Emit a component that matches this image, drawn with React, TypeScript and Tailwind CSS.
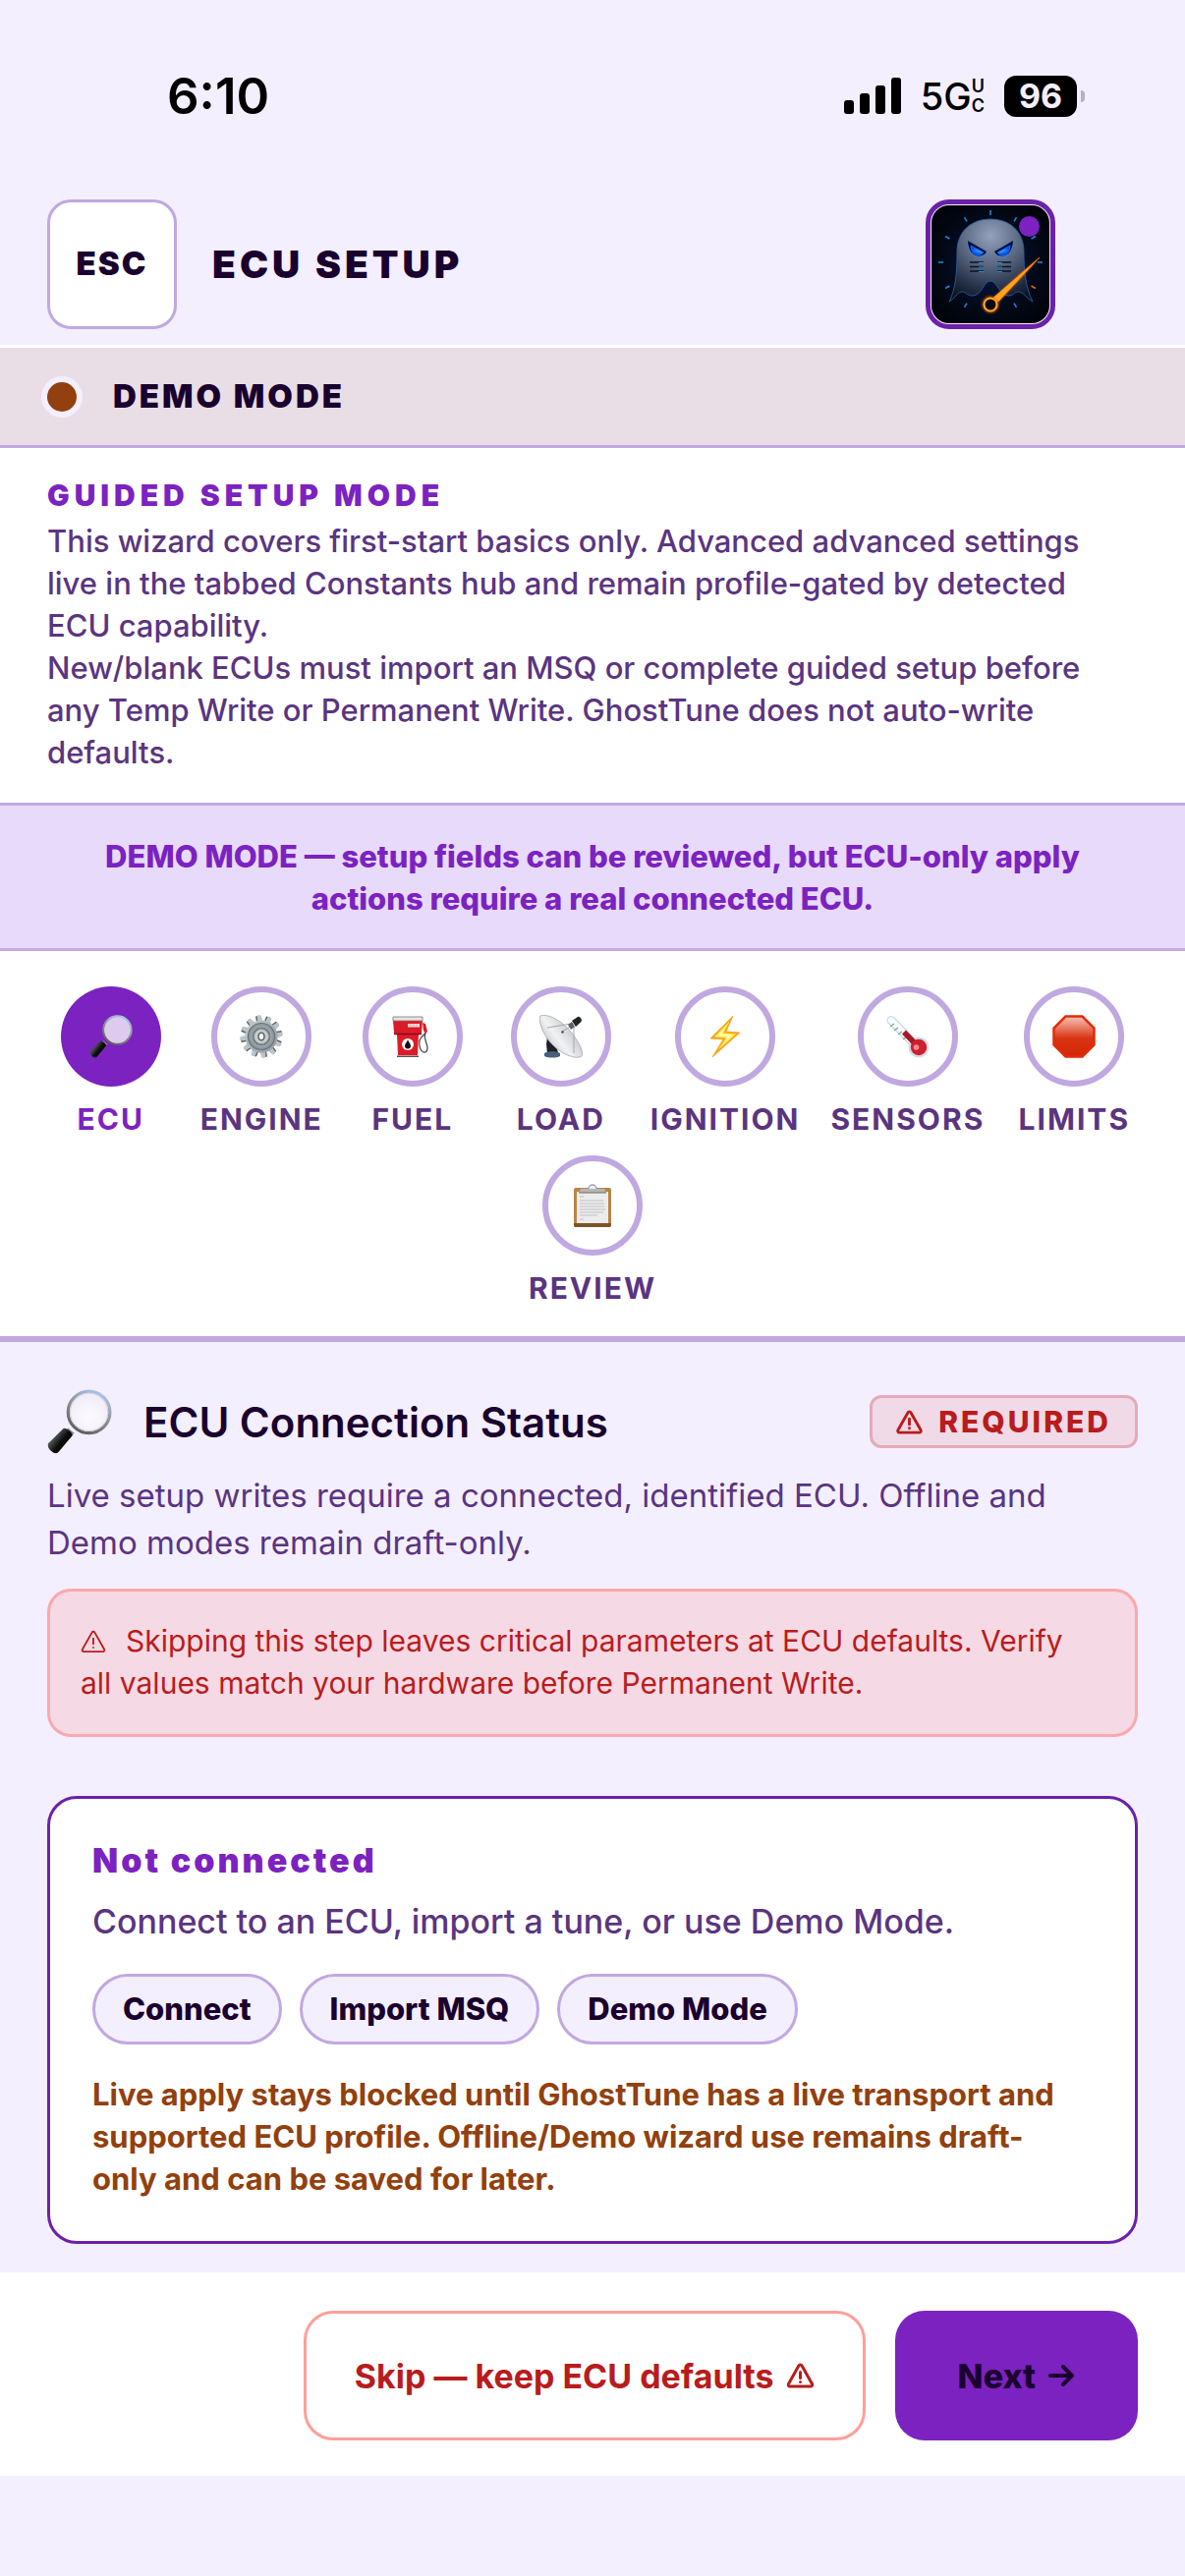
import { useId } from 'react'
import type { ReactNode } from 'react'

type IconProps = { className?: string }

function Magnifier({ className }: IconProps) {
  const id = useId()
  return (
    <svg viewBox="0 0 62 62" className={className} aria-hidden="true">
      <defs>
        <radialGradient id={`${id}g`} cx="0.5" cy="0.6" r="0.6">
          <stop offset="0" stopColor="#fff" stopOpacity="0.75" />
          <stop offset="1" stopColor="#efe9f6" stopOpacity="0.85" />
        </radialGradient>
        <linearGradient id={`${id}r`} x1="0.7" y1="0" x2="0.2" y2="1">
          <stop offset="0" stopColor="#a9c4ea" />
          <stop offset="0.5" stopColor="#8d8d90" />
          <stop offset="1" stopColor="#5b5b5b" />
        </linearGradient>
        <linearGradient id={`${id}h`} x1="0" y1="0" x2="1" y2="0.8">
          <stop offset="0" stopColor="#111" />
          <stop offset="0.35" stopColor="#4a5052" />
          <stop offset="0.6" stopColor="#0b0b0b" />
        </linearGradient>
      </defs>
      <path d="M20 37l6 5-5 6-6-6z" fill="#8a8a8a" />
      <path d="M15.500 37.500c2-1.500 9.500 4 8.500 7L11 60c-3 4-12-3-10-8z" fill={`url(#${id}h)`} />
      <circle cx="40" cy="22" r="20" fill={`url(#${id}g)`} stroke={`url(#${id}r)`} strokeWidth="3" />
      <circle cx="40" cy="22" r="18" fill="none" stroke="#d5d5da" strokeWidth="1" />
    </svg>
  )
}

function Gear({ className }: IconProps) {
  const id = useId()
  return (
    <svg viewBox="0 0 44 44" className={className} aria-hidden="true">
      <defs>
        <linearGradient id={id} x1="0" y1="0" x2="1" y2="1">
          <stop offset="0" stopColor="#c6cdd2" />
          <stop offset="1" stopColor="#8d979d" />
        </linearGradient>
      </defs>
      {Array.from({ length: 12 }, (_, i) => (
        <g key={i} transform={`rotate(${i * 30 - 8} 22 22)`}>
          <path d="M19 1l4-.5 2 8h-6z" fill="#5d5650" />
          <path d="M20.500 0.500h4l1.500 8h-6z" fill="#b9c4cb" />
        </g>
      ))}
      <circle cx="22" cy="22" r="16.500" fill={`url(#${id})`} />
      <circle cx="22" cy="22" r="13.500" fill="#929ba0" stroke="#68727a" strokeWidth="1.200" />
      <circle cx="22" cy="22" r="10" fill="#747d83" stroke="#a9b1b5" strokeWidth="1" />
      <circle cx="22" cy="22" r="7.500" fill="#c3cdd4" stroke="#8a949a" strokeWidth="0.800" />
      <ellipse cx="22" cy="22" rx="3" ry="3.800" fill="#fff" stroke="#6a625c" strokeWidth="1.600" />
    </svg>
  )
}

function FuelPump({ className }: IconProps) {
  return (
    <svg viewBox="0 0 44 44" className={className} aria-hidden="true">
      <path d="M35 18c-1 3-5 4-6 8-1 6 1 11 4 12 4 1 5-4 3-9-1-4-3-6-1-11" fill="none" stroke="#4d4d4d" strokeWidth="1.300" />
      <path d="M32 8l3 1 2 8-2 2-2-3z" fill="#d0222c" />
      <path d="M6 20h22l-1 21H7z" fill="#df1a28" />
      <path d="M2 5h30l-1 14H3z" fill="#dc1b28" />
      <path d="M2 2h30v4H2z" fill="#e9e3e3" stroke="#777" strokeWidth="0.800" />
      <path d="M17 9h12v3.500H17z" fill="#f6dede" />
      <path d="M20 9v3.500M23 9v3.500M26 9v3.500" stroke="#d77" strokeWidth="0.600" />
      <path d="M3 19.500h28" stroke="#7d0d15" strokeWidth="1.400" />
      <circle cx="17" cy="30" r="6" fill="#fff" />
      <path d="M17 25.500c2 3.500 3 4.500 3 6a3 3 0 0 1-6 0c0-1.500 1-2.500 3-6z" fill="#111" />
      <path d="M6 41.500h22v1.500H6z" fill="#5b4b4b" />
    </svg>
  )
}

function Dish({ className }: IconProps) {
  const id = useId()
  return (
    <svg viewBox="0 0 44 44" className={className} aria-hidden="true">
      <defs>
        <linearGradient id={id} x1="0" y1="1" x2="1" y2="0.300">
          <stop offset="0" stopColor="#a5a6a9" />
          <stop offset="0.500" stopColor="#f1f2f4" />
          <stop offset="1" stopColor="#b4b7ba" />
        </linearGradient>
      </defs>
      <path d="M8 22l9 8 2 9H8l-1-9z" fill="#1e2226" />
      <path d="M5 39c3-2.500 13-2.500 16 0v3c-4 2-12 2-16 0z" fill="#46607c" />
      <path d="M1 1c8-3 24 6 33 19 7 9 11 18 9 22-6 4-21-2-31-13C4 21-2 5 1 1z" fill={`url(#${id})`} stroke="#a3a5a8" strokeWidth="0.800" />
      <path d="M8 13l24-4M35 12v27M23 17l10-6" stroke="#a3a7ab" strokeWidth="1" fill="none" />
      <circle cx="23.500" cy="17.500" r="1.200" fill="#444" />
      <path d="M29 10l3 5 4-3-3-5z" fill="#5e6266" />
      <path d="M33 6l6-4c2-1 5 3 3.500 5L37 12z" fill="#202428" />
    </svg>
  )
}

function Bolt({ className }: IconProps) {
  return (
    <svg viewBox="0 0 44 44" className={className} aria-hidden="true">
      <path d="M30 1L7 24l13 1L9 43l28-25-14-1z" fill="#f9a51c" stroke="#f9a51c" strokeWidth="0.800" strokeLinejoin="round" />
      <path d="M26.500 6.500L11 22.500l12 1-8 12L33 19.500l-13-1z" fill="#fff25e" />
      <path d="M22 13l-7 8 10 1-4 6 8-7-11-1z" fill="#fffcd0" />
    </svg>
  )
}

function Thermometer({ className }: IconProps) {
  return (
    <svg viewBox="0 0 44 44" className={className} aria-hidden="true">
      <path d="M5 5.500L30 31" stroke="#c5dce6" strokeWidth="9" strokeLinecap="round" />
      <path d="M5 5.500L30 31" stroke="#f8fbfc" strokeWidth="6.500" strokeLinecap="round" />
      <path d="M4 12l4-3M8 16l4-3M12 20l4-3M17 25l4-3" stroke="#8c9aa3" strokeWidth="1.200" />
      <circle cx="33" cy="33" r="10.500" fill="#cfdfe6" />
      <path d="M18 17.500l13 13.500" stroke="#a81824" strokeWidth="5.500" />
      <circle cx="33" cy="33" r="8.200" fill="#d0202f" />
      <circle cx="30.500" cy="33" r="2.800" fill="#f58a93" />
    </svg>
  )
}

function StopSign({ className }: IconProps) {
  const id = useId()
  return (
    <svg viewBox="0 0 44 44" className={className} aria-hidden="true">
      <defs>
        <linearGradient id={id} x1="0" y1="0" x2="0" y2="1">
          <stop offset="0" stopColor="#f9c3b8" />
          <stop offset="0.550" stopColor="#d93413" />
          <stop offset="1" stopColor="#d22704" />
        </linearGradient>
      </defs>
      <path d="M13.500 1.500h17l12 12v17l-12 12h-17l-12-12v-17z" fill={`url(#${id})`} stroke="#e42b08" strokeWidth="2.500" />
    </svg>
  )
}

function Clipboard({ className }: IconProps) {
  return (
    <svg viewBox="0 0 44 44" className={className} aria-hidden="true">
      <rect x="3" y="4" width="38" height="40" rx="2" fill="#b98544" />
      <path d="M3 40h38v2a2 2 0 0 1-2 2H5a2 2 0 0 1-2-2z" fill="#7d5426" />
      <path d="M6 8h32v32H6z" fill="#ececed" />
      <path d="M9 13h4M9 17h24M9 20h25M9 23h25M9 26h26M9 29h24M9 32h18M9 36h4" stroke="#cfcfd2" strokeWidth="1.500" />
      <path d="M10 5h24l2 4H8z" fill="#b4b8bc" />
      <path d="M8 9h28" stroke="#7a6652" strokeWidth="1" />
      <path d="M18 5a4 4 0 0 1 8 0" fill="#e9f1fa" stroke="#9aa6b4" strokeWidth="1.400" />
    </svg>
  )
}

function WarnIcon({ className, stroke = 2.5 }: IconProps & { stroke?: number }) {
  return (
    <svg viewBox="0 0 28 26" className={className} fill="none" stroke="currentColor" strokeWidth={stroke} strokeLinejoin="round" strokeLinecap="round" aria-hidden="true">
      <path d="M12.500 2.800a1.700 1.700 0 0 1 3 0l10.500 18.600a1.700 1.700 0 0 1-1.500 2.600H3.500a1.700 1.700 0 0 1-1.500-2.600z" />
      <path d="M14 9.500v6" />
      <path d="M14 19.400v.1" />
    </svg>
  )
}

function GhostLogo({ className }: IconProps) {
  const ticks = [0, 30, 60, 90, 120, 150, 210, 240, 270, 300, 330]
  return (
    <svg viewBox="0 0 120 120" className={className} aria-hidden="true">
      <defs>
        <radialGradient id="ghost-bg" cx="0.5" cy="0.5" r="0.65">
          <stop offset="0" stopColor="#06194a" />
          <stop offset="0.6" stopColor="#020918" />
          <stop offset="1" stopColor="#000207" />
        </radialGradient>
        <radialGradient id="ghost-body" cx="0.5" cy="0.2" r="0.85">
          <stop offset="0" stopColor="#93a1bc" />
          <stop offset="0.45" stopColor="#56637d" />
          <stop offset="0.75" stopColor="#27334a" />
          <stop offset="1" stopColor="#0b1322" />
        </radialGradient>
        <radialGradient id="ghost-eye">
          <stop offset="0" stopColor="#8df6ff" />
          <stop offset="0.5" stopColor="#26b4ff" />
          <stop offset="1" stopColor="#0a4af0" />
        </radialGradient>
        <filter id="ghost-glow" x="-40%" y="-40%" width="180%" height="180%">
          <feGaussianBlur stdDeviation="1.600" />
        </filter>
      </defs>
      <rect width="120" height="120" rx="18" fill="url(#ghost-bg)" />
      {ticks.map((a) => (
        <path key={a} d="M60 5v5" stroke={a === 120 ? '#d8661c' : '#1586e0'} strokeWidth="1.600" transform={`rotate(${a} 60 58)`} />
      ))}
      <path
        d="M60 14c-20 0-34 13-34 33 0 20-1 37-8 51 6-3 8-10 13-10 4 0 5 4 11 4 9 0 11-15 18-15s9 15 18 15c6 0 6-4 10-4 6 0 9 7 15 10-7-14-9-31-9-51 0-20-14-33-34-33z"
        fill="url(#ghost-body)"
        stroke="#2c62a8"
        strokeWidth="0.800"
      />
      <path d="M37 37l18 10c-2 8-15 8-18-10zM83 37L65 47c2 8 15 8 18-10z" fill="#2f86ff" filter="url(#ghost-glow)" />
      <path d="M37 36l19 11c-3 7-18 8-19-11zM83 36L64 47c3 7 18 8 19-11z" fill="#04102e" />
      <path d="M40 41l13 7c-4 5-13 3-13-7zM80 41l-13 7c4 5 13 3 13-7z" fill="url(#ghost-eye)" stroke="#1560ff" />
      <path d="M39 58h14M39 62.500h14M39 67h14M67 58h14M67 62.500h14M67 67h14" stroke="#0a1222" strokeWidth="1.400" />
      <path d="M48 58.500h5M48 63h5M48 67.500h5M67 58.500h5M67 63h5M67 67.500h5" stroke="#1c8fd4" strokeWidth="1.200" />
      <path d="M110 53L67 99l-4-4z" fill="#ff5a00" filter="url(#ghost-glow)" />
      <circle cx="60" cy="101" r="6.500" fill="none" stroke="#ff5a00" strokeWidth="3" filter="url(#ghost-glow)" />
      <path d="M110 53L68 98l-4.500-4.500z" fill="#ffa51f" stroke="#ff7a00" strokeWidth="0.800" />
      <circle cx="60" cy="101" r="6.500" fill="#0b0505" stroke="#ffae22" strokeWidth="2" />
    </svg>
  )
}

const STEPS: { label: string; icon: (p: IconProps) => ReactNode; active?: boolean }[] = [
  { label: 'ECU', icon: Magnifier, active: true },
  { label: 'ENGINE', icon: Gear },
  { label: 'FUEL', icon: FuelPump },
  { label: 'LOAD', icon: Dish },
  { label: 'IGNITION', icon: Bolt },
  { label: 'SENSORS', icon: Thermometer },
  { label: 'LIMITS', icon: StopSign },
  { label: 'REVIEW', icon: Clipboard },
]

const CONNECT_ACTIONS = ['Connect', 'Import MSQ', 'Demo Mode']

function StatusBar() {
  return (
    <div className="flex items-center justify-between pt-[68px] pl-[170px] pr-[102px] text-black">
      <span className="text-[51px] leading-[60px] font-semibold">6:10</span>
      <div className="flex items-center">
        <svg viewBox="0 0 58 38" className="w-[58px] h-[38px]" aria-hidden="true">
          <rect x="0" y="23" width="10" height="14" rx="3" />
          <rect x="16" y="16" width="10" height="21" rx="3" />
          <rect x="32" y="8" width="10" height="29" rx="3" />
          <rect x="48" y="0" width="10" height="37" rx="3" />
        </svg>
        <span className="ml-5 text-[38px] leading-[48px] font-medium">5G</span>
        <span className="flex flex-col text-[18px] leading-5 font-semibold">
          <span>U</span>
          <span>C</span>
        </span>
        <span className="ml-5 w-[74px] h-[42px] rounded-xl bg-black text-[#f4efff] text-[34px] leading-[42px] font-bold text-center">96</span>
        <span className="ml-1 w-1 h-3 rounded-r-full bg-[#b5b1bd]" />
      </div>
    </div>
  )
}

function Header() {
  return (
    <header className="flex items-center justify-between pt-[75px] pb-4 pl-12 pr-[132px] border-b-3 border-white">
      <div className="flex items-center gap-9">
        <button type="button" className="size-[132px] rounded-3xl border-3 border-[#c0a8e0] bg-white text-[33px] font-black tracking-[2px]">
          ESC
        </button>
        <h1 className="text-[39px] font-black tracking-[4px]">ECU SETUP</h1>
      </div>
      <button type="button" aria-label="GhostTune" className="relative size-[132px] rounded-3xl border-[5px] border-[#6b21a8] p-px">
        <GhostLogo className="size-full" />
        <span className="absolute top-3 right-[11px] size-[21px] rounded-full bg-[#7b22c1]" />
      </button>
    </header>
  )
}

export default function App() {
  return (
    <div className="min-h-screen bg-[#f4efff] text-[#1a002e] font-[Inter,'Liberation_Sans',sans-serif]">
      <StatusBar />
      <Header />

      <div className="flex items-center gap-[37px] h-[102px] px-12 bg-[#e9dee5] border-b-3 border-[#c0a8e0]">
        <span className="size-[30px] rounded-full bg-[#92400e] ring-6 ring-[#f4efff]" />
        <span className="text-[33px] font-black tracking-[3px]">DEMO MODE</span>
      </div>

      <section className="pl-12 pr-24 pt-[27px] pb-[30px] bg-white border-b-3 border-[#c0a8e0] text-[31px] leading-[43px] font-medium text-[#5b3480]">
        <h2 className="text-[30px] text-[#7b22c1] font-black tracking-[5px]">GUIDED SETUP MODE</h2>
        <p className="mt-[3px]">
          This wizard covers first-start basics only. Advanced advanced settings live in the tabbed Constants hub and remain profile-gated by detected ECU capability.
        </p>
        <p>New/blank ECUs must import an MSQ or complete guided setup before any Temp Write or Permanent Write. GhostTune does not auto-write defaults.</p>
      </section>

      <p className="px-20 pt-[30px] pb-[29px] bg-[#e8dafa] border-b-3 border-[#c9a8ea] text-center text-[31px] leading-[43px] font-extrabold text-[#7b22c1]">
        DEMO MODE — setup fields can be reviewed, but ECU-only apply actions require a real connected ECU.
      </p>

      {/* Step navigation */}
      <nav className="flex flex-wrap justify-center gap-x-[31px] gap-y-4 px-12 pt-9 pb-7 bg-white border-b-6 border-[#c0a8e0]">
        {STEPS.map(({ label, icon: Icon, active }) => (
          <button key={label} type="button" className="flex flex-col items-center gap-3 min-w-[120px]">
            <span
              className={
                active
                  ? 'flex items-center justify-center size-[102px] rounded-full bg-[#7b22c1]'
                  : 'flex items-center justify-center size-[102px] rounded-full border-6 border-[#c0a8e0] bg-white'
              }
            >
              <Icon className="size-11" />
            </span>
            <span className={active ? 'text-[30px] leading-[42px] font-bold tracking-[2px] text-[#7b22c1]' : 'text-[30px] leading-[42px] font-bold tracking-[2px] text-[#5b3480]'}>
              {label}
            </span>
          </button>
        ))}
      </nav>

      <main className="px-12 pt-12 pb-[29px]">
        <div className="flex items-center justify-between">
          <div className="flex items-center gap-8">
            <Magnifier className="size-[66px]" />
            <h2 className="text-[42px] font-semibold">ECU Connection Status</h2>
          </div>
          <span className="flex items-center gap-4 h-[54px] px-6 rounded-xl border-3 border-[#e3abb8] bg-[#f0dae7] text-[30px] font-extrabold tracking-[3px] text-[#b91c1c]">
            <WarnIcon className="w-[27px] h-[25px]" stroke={3} />
            REQUIRED
          </span>
        </div>

        <p className="mt-[18px] text-[33px] leading-12 text-[#5b3480]">
          Live setup writes require a connected, identified ECU. Offline and Demo modes remain draft-only.
        </p>

        <p className="mt-[23px] pl-[31px] pr-12 pt-[29px] pb-[30px] rounded-3xl border-3 border-[#fba8ac] bg-[#f5d9e5] text-[30px] leading-[43px] text-[#b91c1c]">
          <WarnIcon className="inline-block w-[26px] h-[24px] mr-5 -mt-1" stroke={2} />
          Skipping this step leaves critical parameters at ECU defaults. Verify all values match your hardware before Permanent Write.
        </p>

        <section className="mt-[60px] px-[43px] pt-[39px] pb-[42px] rounded-[30px] border-3 border-[#6b21a8] bg-white">
          <h3 className="text-[34px] leading-12 font-black tracking-[3px] text-[#7b22c1]">Not connected</h3>
          <p className="mt-[14px] text-[34px] leading-12 font-medium text-[#5b3480]">Connect to an ECU, import a tune, or use Demo Mode.</p>
          <div className="flex gap-[18px] mt-[29px]">
            {CONNECT_ACTIONS.map((action) => (
              <button key={action} type="button" className="h-[72px] px-7 rounded-full border-3 border-[#c0a8e0] bg-[#f4efff] text-[31px] font-extrabold">
                {action}
              </button>
            ))}
          </div>
          <p className="mt-[29px] pr-4 text-[31px] leading-[43px] font-bold text-[#92400e]">
            Live apply stays blocked until GhostTune has a live transport and supported ECU profile. Offline/Demo wizard use remains draft-only and can be saved for later.
          </p>
        </section>
      </main>

      <footer className="flex justify-end gap-[30px] px-12 pt-[39px] pb-9 bg-white text-[34px] font-bold">
        <button type="button" className="flex items-center gap-3 h-[132px] px-[49px] rounded-[30px] border-3 border-[#ff9f99] text-[#b91c1c]">
          Skip — keep ECU defaults
          <WarnIcon className="w-[29px] h-[26px]" stroke={3} />
        </button>
        <button type="button" className="flex items-center gap-3 h-[132px] px-16 rounded-[30px] bg-[#7b22c1] font-extrabold">
          Next
          <svg viewBox="0 0 28 26" className="w-[28px] h-[26px]" fill="none" stroke="currentColor" strokeWidth="4" strokeLinecap="round" strokeLinejoin="round" aria-hidden="true">
            <path d="M3 13h22M16 4l9 9-9 9" />
          </svg>
        </button>
      </footer>
    </div>
  )
}
